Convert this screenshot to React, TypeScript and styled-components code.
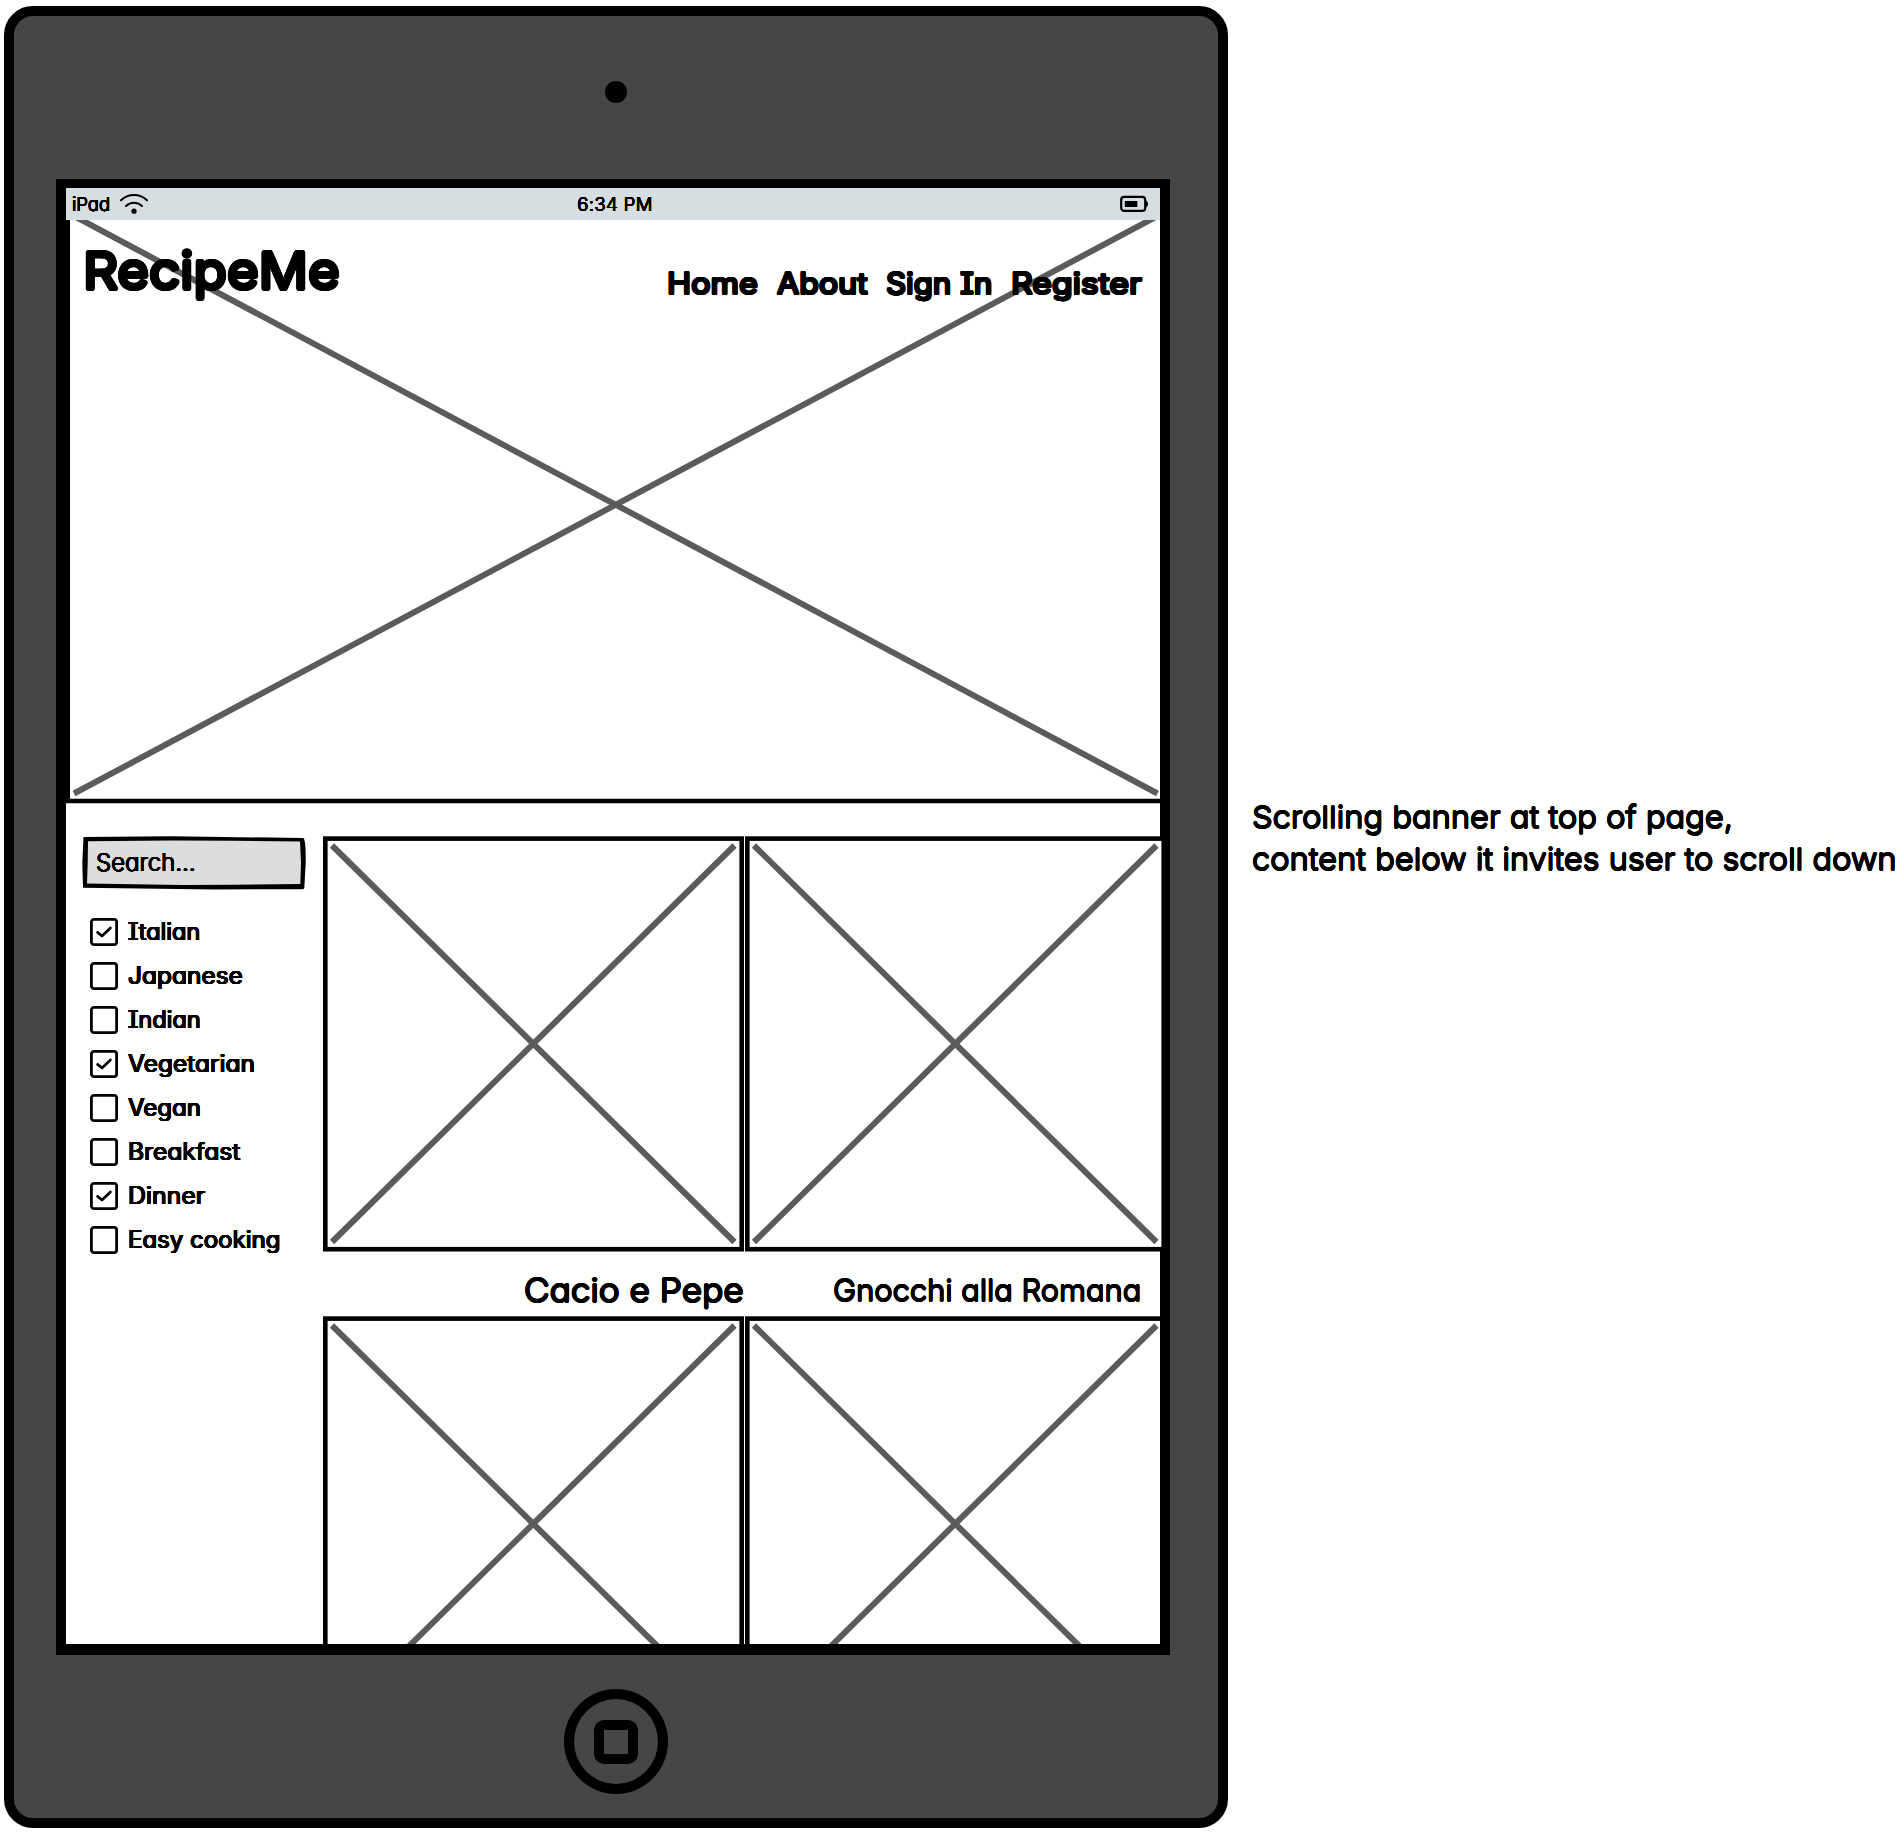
import React from "react";
import styled, { createGlobalStyle, css } from "styled-components";

/* Thickens glyphs evenly in every direction, so that strokes get round ends like a felt pen. */
const pen = (r: number) =>
  Array.from({ length: 12 }, (_, i) => {
    const a = (i * Math.PI) / 6;
    return `${(Math.cos(a) * r).toFixed(2)}px ${(Math.sin(a) * r).toFixed(2)}px 0 #000`;
  }).join(",");

/* The lettering is wide and round: $stretch widens the glyphs, $spacing the gaps between them. */
const handwriting = css<{ $spacing?: number; $stretch?: number }>`
  letter-spacing: ${(p) => p.$spacing ?? 0}px;
  transform: scaleX(${(p) => p.$stretch ?? 1});
  transform-origin: left center;
  white-space: nowrap;
`;

const GlobalStyle = createGlobalStyle`
  body {
    margin: 0;
    background: #fff;
    color: #000;
    font-family: Inter, "Liberation Sans", sans-serif;
    font-feature-settings: "cv11", "cv08";
    font-variation-settings: "opsz" 32;
    font-weight: 300;
  }
`;

const Page = styled.div`
  display: flex;
  align-items: flex-start;
  width: 1898px;
  height: 1832px;
  overflow: hidden;
`;

const Tablet = styled.main`
  box-sizing: border-box;
  flex: none;
  display: flex;
  flex-direction: column;
  align-items: center;
  width: 1224px;
  height: 1822px;
  margin: 6px 0 0 4px;
  border: 10px solid #000;
  border-radius: 29px;
  background: #464646;
`;

const Camera = styled.div`
  flex: none;
  width: 22px;
  height: 22px;
  margin: 65px 0 76px;
  border-radius: 50%;
  background: #000;
`;

const Screen = styled.div`
  box-sizing: border-box;
  flex: none;
  align-self: flex-start;
  display: flex;
  flex-direction: column;
  width: 1114px;
  height: 1476px;
  margin-left: 42px;
  border: solid #000;
  border-width: 9px 10px 11px;
  background: #fff;
  overflow-x: visible;
  overflow-y: clip;
`;

const StatusBar = styled.div`
  flex: none;
  box-sizing: border-box;
  display: grid;
  grid-template-columns: 1fr auto 1fr;
  align-items: center;
  height: 32px;
  padding: 0 12px 0 6px;
  background: #d7dee1;
  font-size: 18.5px;
  line-height: 30px;
  text-shadow: ${pen(0.25)};
`;

const Carrier = styled.div`
  display: flex;
  align-items: center;
  gap: 9px;
`;

const CarrierName = styled.span`
  ${handwriting}
`;

const Clock = styled.span`
  ${handwriting}
  margin-left: 10px;
`;

const WifiIcon = styled.svg`
  width: 30px;
  height: 22px;
`;

const BatteryIcon = styled.svg`
  justify-self: end;
  width: 28px;
  height: 18px;
`;

const Banner = styled.header`
  flex: none;
  position: relative;
  display: flex;
  justify-content: space-between;
  align-items: flex-start;
  height: 584px;
  padding: 0 18px 0 17px;
`;

const BannerArt = styled.svg`
  position: absolute;
  inset: 0;
  width: 1094px;
  height: 584px;
`;

const Logo = styled.h1`
  ${handwriting}
  position: relative;
  margin: 21px 0 0;
  font-size: 51px;
  line-height: 60px;
  font-weight: 400;
  text-shadow: ${pen(1.9)};
`;

const Nav = styled.nav`
  position: relative;
  display: grid;
  grid-template-columns: 110px 109.5px 125px 131px;
  margin-top: 45px;
`;

const NavLink = styled.a`
  ${handwriting}
  font-size: 29.5px;
  line-height: 36px;
  font-weight: 400;
  text-shadow: ${pen(1.1)};
`;

const Content = styled.div`
  display: flex;
  padding-top: 32px;
`;

const Sidebar = styled.aside`
  flex: none;
  width: 241px;
  padding-left: 16px;
`;

const SearchBox = styled.div`
  position: relative;
  box-sizing: border-box;
  width: 224px;
  height: 54px;
  padding-left: 14px;
  font-size: 24px;
  line-height: 53px;
  text-shadow: ${pen(0.4)};
`;

const SearchFrame = styled.svg`
  position: absolute;
  inset: 0;
  width: 224px;
  height: 54px;
`;

const SearchText = styled.span`
  ${handwriting}
  position: relative;
`;

const Filters = styled.ul`
  display: flex;
  flex-direction: column;
  gap: 16px;
  margin: 28px 0 0 8px;
  padding: 0;
  list-style: none;
`;

const Filter = styled.li`
  display: flex;
  align-items: center;
  gap: 10px;
  height: 28px;
`;

const Box = styled.svg`
  flex: none;
  width: 28px;
  height: 28px;
`;

const FilterLabel = styled.span`
  ${handwriting}
  font-size: 24px;
  line-height: 28px;
  font-weight: 400;
  text-shadow: ${pen(0.45)};
`;

const Recipes = styled.section`
  flex: none;
`;

const CardRow = styled.div<{ $clipped?: boolean }>`
  display: flex;
  gap: 1px;
  width: ${(p) => (p.$clipped ? 837 : 843)}px;
  height: 415px;
  overflow: ${(p) => (p.$clipped ? "hidden" : "visible")};
`;

const CardArt = styled.svg`
  flex: none;
  width: 421px;
  height: 416px;
`;

const Captions = styled.div`
  display: grid;
  grid-template-columns: 421px 397px;
  justify-items: end;
  height: 65px;
`;

const Caption = styled.h2<{ $large?: boolean }>`
  ${handwriting}
  transform-origin: right center;
  margin: ${(p) => (p.$large ? 18 : 17)}px 0 0;
  font-size: ${(p) => (p.$large ? 32 : 29.5)}px;
  line-height: 44px;
  font-weight: 300;
  text-shadow: ${(p) => (p.$large ? pen(0.85) : pen(0.6))};
`;

const HomeButton = styled.div`
  box-sizing: border-box;
  flex: none;
  display: grid;
  place-items: center;
  width: 104px;
  height: 105px;
  margin-top: 34px;
  border: 10px solid #000;
  border-radius: 50%;
`;

const HomeGlyph = styled.div`
  box-sizing: border-box;
  width: 44px;
  height: 44px;
  border: 10px solid #000;
  border-radius: 10px;
`;

const Note = styled.p`
  margin: 797px 0 0 24px;
  font-size: 30px;
  line-height: 41.5px;
  text-shadow: ${pen(0.6)};
`;

const NoteLine = styled.span`
  ${handwriting}
  display: block;
`;

const Card = () => (
  <CardArt viewBox="0 0 421 416">
    <rect x="2.3" y="2.6" width="416.4" height="410.6" fill="#fff" stroke="#000" strokeWidth="4.6" />
    <path d="M9 9.5 L411.5 406 M411.5 9.5 L9 406" stroke="#5b5b5c" strokeWidth="6" />
  </CardArt>
);

const links: [string, number][] = [
  ["Home", 1.1],
  ["About", 1.09],
  ["Sign In", 1.06],
  ["Register", 1.145],
];

const filters: [string, boolean, number][] = [
  ["Italian", true, 0.98],
  ["Japanese", false, 1.02],
  ["Indian", false, 0.98],
  ["Vegetarian", true, 1.02],
  ["Vegan", false, 1],
  ["Breakfast", false, 1.025],
  ["Dinner", true, 1.035],
  ["Easy cooking", false, 1],
];

export default function App() {
  return (
    <Page>
      <GlobalStyle />
      <Tablet>
        <Camera />
        <Screen>
          <StatusBar>
            <Carrier>
              <CarrierName>iPad</CarrierName>
              <WifiIcon viewBox="0 0 30 22" fill="none" stroke="#000" strokeWidth="2.1" strokeLinecap="round">
                <path d="M2 7.2 C9 0.2 21 0.2 28 7.2 M7 13 C11.5 8.6 18.5 8.6 23 13" />
                <circle cx="15" cy="18.2" r="2.6" fill="#000" stroke="none" />
              </WifiIcon>
            </Carrier>
            <Clock $spacing={0.4}>6:34 PM</Clock>
            <BatteryIcon viewBox="0 0 28 18">
              <rect x="1.2" y="1.9" width="24" height="14" rx="3" fill="none" stroke="#000" strokeWidth="2.2" />
              <path d="M26 5.5 Q28 6 28 9 Q28 12 26 12.5 Z" />
              <rect x="4.8" y="6" width="12.5" height="6" />
            </BatteryIcon>
          </StatusBar>
          <Banner>
            <BannerArt viewBox="0 0 1094 584">
              <path d="M1.8 0 V581 H1094" fill="none" stroke="#000" strokeWidth="4.4" />
              <path d="M8 -4 L1091.5 573.5 M1091.5 -4 L8 573.5" stroke="#5b5b5c" strokeWidth="6" />
            </BannerArt>
            <Logo $stretch={1.07}>RecipeMe</Logo>
            <Nav>
              {links.map(([name, stretch]) => (
                <NavLink key={name} $stretch={stretch}>
                  {name}
                </NavLink>
              ))}
            </Nav>
          </Banner>
          <Content>
            <Sidebar>
              <SearchBox>
                <SearchFrame viewBox="0 0 224 54">
                  <path d="M1.5 1 L90 0.3 L221 2 Q224 2 223.7 27 L222.3 52 Q222 53.5 219 53.2 L133 53.4 L1 51.7 L0.3 27 Z" />
                  <path
                    d="M6 5.3 L90 4.5 L150 4.8 L218 5.5 L219 27 L218.3 48 L150 48.7 L100 49 L5 47.5 L5.7 27 Z"
                    fill="#ddd"
                  />
                </SearchFrame>
                <SearchText>Search...</SearchText>
              </SearchBox>
              <Filters>
                {filters.map(([name, on, stretch]) => (
                  <Filter key={name}>
                    <Box viewBox="0 0 28 28" fill="none" stroke="#000" strokeLinecap="round">
                      <rect x="1.4" y="1.4" width="25.2" height="25.2" rx="2.6" strokeWidth="2.8" />
                      {on && <path d="M7.6 14.4 L12 18 L20.4 10" strokeWidth="2.7" strokeLinejoin="round" />}
                    </Box>
                    <FilterLabel $stretch={stretch}>{name}</FilterLabel>
                  </Filter>
                ))}
              </Filters>
            </Sidebar>
            <Recipes>
              <CardRow>
                <Card />
                <Card />
              </CardRow>
              <Captions>
                <Caption $large $stretch={1.1}>
                  Cacio e Pepe
                </Caption>
                <Caption $stretch={1.047}>Gnocchi alla Romana</Caption>
              </Captions>
              <CardRow $clipped>
                <Card />
                <Card />
              </CardRow>
            </Recipes>
          </Content>
        </Screen>
        <HomeButton>
          <HomeGlyph />
        </HomeButton>
      </Tablet>
      <Note>
        <NoteLine $stretch={1.088}>Scrolling banner at top of page,</NoteLine>
        <NoteLine $stretch={1.087}>content below it invites user to scroll down</NoteLine>
      </Note>
    </Page>
  );
}
